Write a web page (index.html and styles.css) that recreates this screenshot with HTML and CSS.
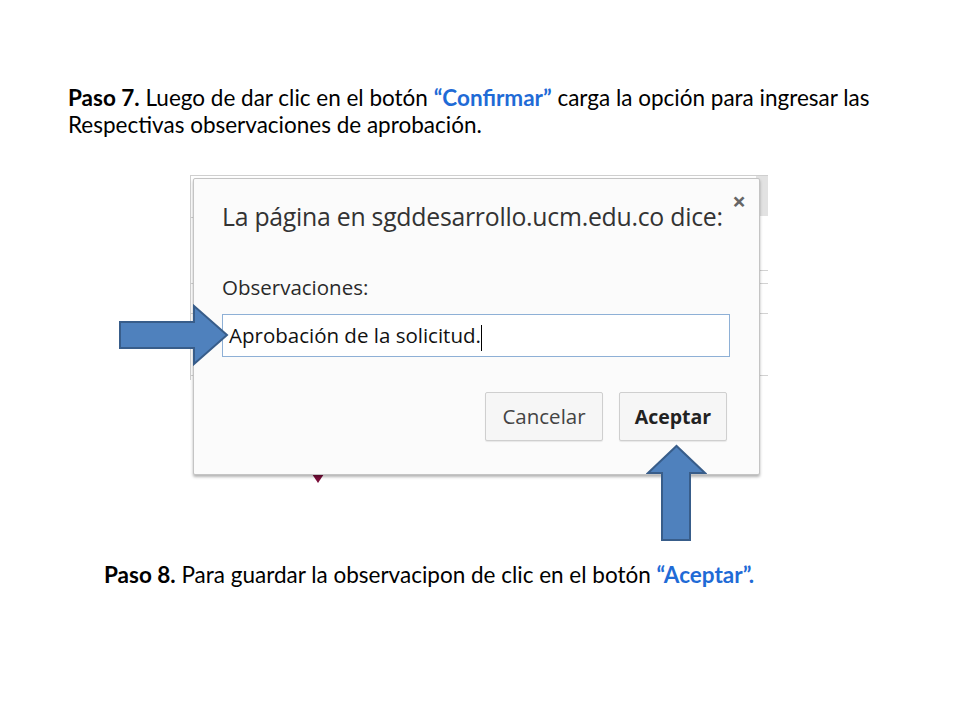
FILE: index.html
```html
<!DOCTYPE html>
<html lang="es">
<head>
  <meta charset="UTF-8">
  <title>Paso 7 y Paso 8</title>
  <link rel="stylesheet" href="styles.css">
</head>
<body>

<div class="slide">
  <p class="step step-7">
    <b>Paso 7.</b> Luego de dar clic en el botón <b class="hl">“Confirmar”</b> carga la opción para ingresar las
    Respectivas observaciones de aprobación.
  </p>

  <div class="figure">
    <div class="shot">
      <!-- lineas de la pagina de fondo -->
      <span class="bg-line top"></span>
      <span class="bg-bar"></span>
      <span class="bg-line l1"></span>
      <span class="bg-line l2"></span>
      <span class="bg-line l3"></span>
      <span class="bg-line l4"></span>
      <span class="bg-line l5"></span>
      <span class="bg-edge"></span>
      <span class="pin"></span>

      <div class="dialog">
        <span class="close">×</span>
        <h2 class="dialog-title">La página en sgddesarrollo.ucm.edu.co dice:</h2>
        <label class="dialog-label">Observaciones:</label>
        <div class="dialog-input">Aprobación de la solicitud.<span class="caret"></span></div>
        <div class="dialog-buttons">
          <span class="dbtn">Cancelar</span>
          <span class="dbtn dbtn-ok">Aceptar</span>
        </div>
      </div>
    </div>

    <svg class="arrow arrow-right" width="112" height="62" viewBox="0 0 112 62">
      <path d="M2 18 H76 V2 L109 31 L76 60 V44 H2 Z" fill="#4f81bd" stroke="#385d8a" stroke-width="2" stroke-linejoin="miter"/>
    </svg>
    <svg class="arrow arrow-up" width="61" height="99" viewBox="0 0 61 99">
      <path d="M2 29 L30.5 2 L59 29 H44 V96 H16 V29 Z" fill="#4f81bd" stroke="#385d8a" stroke-width="2" stroke-linejoin="miter"/>
    </svg>
  </div>

  <p class="step step-8">
    <b>Paso 8.</b> Para guardar la observacipon de clic en el botón <b class="hl">“Aceptar”.</b>
  </p>
</div>

</body>
</html>
```

FILE: styles.css
```css
/* Diapositiva */
body {
  margin: 0;
  background: #fff;
}

.slide {
  width: 960px;
  height: 720px;
  font-family: Lato, "Open Sans", sans-serif;
  color: #000;
  overflow: hidden;
}

.step {
  margin: 0;
  font-size: 22.5px;
  line-height: 27px;
}

.step b {
  font-weight: bold;
}

.hl {
  color: #1f6bd6;
}

.step-7 {
  padding: 84px 0 0 68px;
  width: 860px;
}

.step-8 {
  padding-left: 104px;
}

/* Captura del dialogo */
.figure {
  position: relative;
  height: 388px;
  margin-top: 35px;
}

.shot {
  position: relative;
  width: 578px;
  height: 314px;
  margin-left: 190px;
  background: #fff;
  font-family: "Open Sans", "Noto Sans", sans-serif;
}

.bg-line {
  position: absolute;
  height: 1px;
  background: #d2d2d2;
}

.bg-line.top { left: 0; right: 0; top: 2px; background: #cfcfcf; }
.bg-line.l1 { left: 0; width: 6px; top: 44px; }
.bg-line.l2 { right: 0; width: 10px; top: 97px; }
.bg-line.l3 { left: 0; right: 0; top: 110px; }
.bg-line.l4 { left: 0; right: 0; top: 140px; }
.bg-line.l5 { left: 0; right: 0; top: 202px; }

.bg-bar {
  position: absolute;
  right: 0;
  top: 3px;
  width: 12px;
  height: 40px;
  background: #e2e2e2;
}

.bg-edge {
  position: absolute;
  left: 0;
  top: 2px;
  width: 1px;
  height: 205px;
  background: #cfcfcf;
}

.pin {
  position: absolute;
  left: 100px;
  top: 301px;
  width: 56px;
  height: 1px;
  background: #6a3050;
}

.pin::after {
  content: "";
  position: absolute;
  left: 22px;
  top: 0;
  border-left: 6px solid transparent;
  border-right: 6px solid transparent;
  border-top: 9px solid #7a0e3a;
}

.dialog {
  position: absolute;
  left: 3px;
  top: 5px;
  width: 567px;
  height: 297px;
  background: #fbfbfb;
  border: 1px solid #c4c4c4;
  border-radius: 2px;
  box-shadow: 0 2px 3px rgba(0, 0, 0, 0.3);
  padding: 0 32px 0 28px;
  box-sizing: border-box;
  color: #333;
}

.close {
  position: absolute;
  right: 13px;
  top: 10px;
  font-size: 24px;
  line-height: 24px;
  color: #666;
  font-weight: bold;
}

.dialog-title {
  margin: 0;
  padding-top: 21px;
  font-size: 24.8px;
  line-height: 32px;
  font-weight: normal;
  color: #333;
  letter-spacing: -0.25px;
  white-space: nowrap;
}

.dialog-label {
  display: block;
  margin-top: 43px;
  font-size: 20.5px;
  line-height: 24px;
  color: #2a2a2a;
}

.dialog-input {
  margin-top: 15px;
  width: 508px;
  height: 43px;
  box-sizing: border-box;
  border: 1px solid #8eb0d6;
  padding: 0 6px;
  font-size: 20.5px;
  line-height: 41px;
  color: #111;
  background: #fff;
}

.caret {
  display: inline-block;
  width: 1px;
  height: 26px;
  background: #000;
  vertical-align: middle;
}

.dialog-buttons {
  display: flex;
  justify-content: flex-end;
  gap: 16px;
  margin-top: 35px;
}

.dbtn {
  height: 49px;
  box-sizing: border-box;
  border: 1px solid #cfcfcf;
  border-radius: 2px;
  background: #f6f6f6;
  box-shadow: 0 1px 1px rgba(0, 0, 0, 0.08);
  font-size: 20.5px;
  line-height: 47px;
  text-align: center;
  color: #444;
}

.dbtn:first-child { width: 118px; }

.dbtn-ok {
  width: 108px;
  font-size: 19.5px;
  font-weight: bold;
  color: #222;
}

/* Flechas */
.arrow {
  position: absolute;
}

.arrow-right {
  left: 118px;
  top: 131px;
}

.arrow-up {
  left: 646px;
  top: 271px;
}
```
